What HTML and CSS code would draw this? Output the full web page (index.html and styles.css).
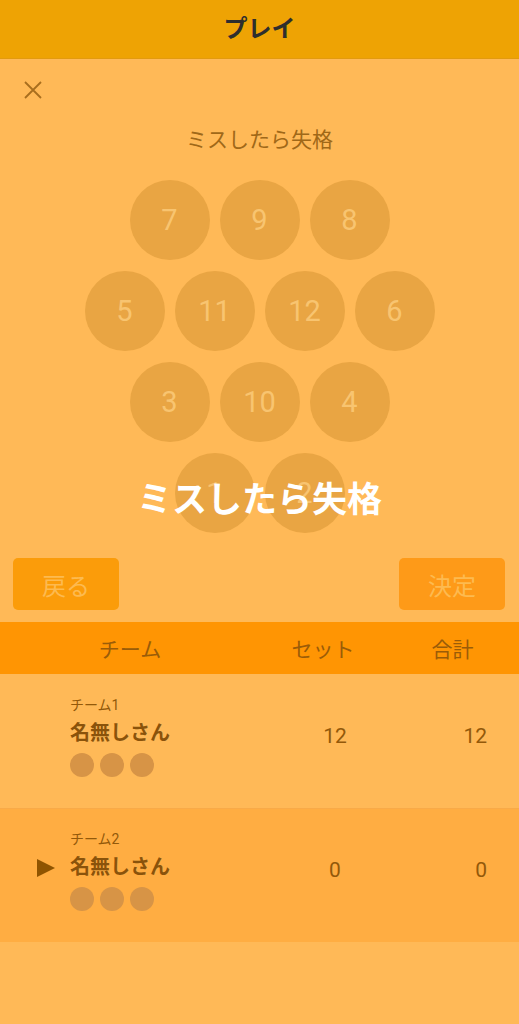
FILE: index.html
```html
<!DOCTYPE html>
<html lang="ja">
<head>
<meta charset="utf-8">
<title>プレイ</title>
<link rel="stylesheet" href="styles.css">
</head>
<body>
<header class="topbar"><h1 class="title">プレイ</h1></header>
<main class="page">
  <section class="panel">
    <div class="close-row">
      <svg class="close-icon" width="20" height="20" viewBox="0 0 20 20"><path d="M2 2 L18 18 M18 2 L2 18" stroke="#A86E1E" stroke-width="1.8" fill="none"/></svg>
    </div>
    <p class="subtitle">ミスしたら失格</p>
    <div class="pins">
      <div class="pin-row"><span class="pin">7</span><span class="pin">9</span><span class="pin">8</span></div>
      <div class="pin-row"><span class="pin">5</span><span class="pin">11</span><span class="pin">12</span><span class="pin">6</span></div>
      <div class="pin-row"><span class="pin">3</span><span class="pin">10</span><span class="pin">4</span></div>
      <div class="pin-row"><span class="pin">1</span><span class="pin">2</span></div>
      <div class="overlay-text">ミスしたら失格</div>
    </div>
    <div class="actions">
      <button class="btn btn-back">戻る</button>
      <button class="btn btn-ok">決定</button>
    </div>
  </section>
  <section class="table">
    <div class="thead">
      <span class="th th-team">チーム</span>
      <span class="th th-set">セット</span>
      <span class="th th-total">合計</span>
    </div>
    <div class="trow">
      <div class="marker"></div>
      <div class="team">
        <div class="team-label">チーム1</div>
        <div class="team-name">名無しさん</div>
        <div class="dots"><span class="dot"></span><span class="dot"></span><span class="dot"></span></div>
      </div>
      <div class="score set">12</div>
      <div class="score total">12</div>
    </div>
    <div class="trow active">
      <div class="marker"><span class="tri"></span></div>
      <div class="team">
        <div class="team-label">チーム2</div>
        <div class="team-name">名無しさん</div>
        <div class="dots"><span class="dot"></span><span class="dot"></span><span class="dot"></span></div>
      </div>
      <div class="score set">0</div>
      <div class="score total">0</div>
    </div>
  </section>
</main>
</body>
</html>
```
FILE: styles.css
```css
* { box-sizing: border-box; }
html, body {
  margin: 0;
  padding: 0;
  height: 100%;
}
body {
  background: #FFB957;
  font-family: "Roboto", "Noto Sans CJK JP", "Noto Sans", sans-serif;
  color: #93590A;
}
.topbar {
  height: 59px;
  background: #EEA304;
  border-bottom: 1px solid #E29A10;
  display: flex;
  align-items: center;
  justify-content: center;
}
.title {
  margin: 0;
  font-size: 24px;
  font-weight: 700;
  color: #2E2E2E;
  line-height: 1;
}
.panel {
  display: flex;
  flex-direction: column;
}
.close-row {
  height: 62px;
  padding: 21px 0 0 23px;
}
.close-icon { display: block; }
.subtitle {
  margin: 0;
  text-align: center;
  font-size: 21px;
  line-height: 38px;
  color: #A06818;
  height: 59px;
}
.pins {
  position: relative;
  display: flex;
  flex-direction: column;
  gap: 11px;
  align-items: center;
}
.pin-row {
  display: flex;
  gap: 10px;
  justify-content: center;
}
.pin {
  width: 80px;
  height: 80px;
  border-radius: 50%;
  background: #E9A543;
  color: #F8C470;
  font-size: 29px;
  display: flex;
  align-items: center;
  justify-content: center;
  line-height: 1;
  padding-top: 1px;
}
.overlay-text {
  position: absolute;
  left: 0;
  right: 0;
  top: 301px;
  text-align: center;
  color: #FFFFFF;
  font-size: 35px;
  font-weight: 700;
  line-height: 40px;
}
.actions {
  display: flex;
  justify-content: space-between;
  padding: 25px 14px 12px 13px;
}
.btn {
  width: 106px;
  height: 52px;
  border: none;
  border-radius: 5px;
  font-family: "Noto Sans CJK JP", sans-serif;
  font-size: 24px;
  color: #FDBA50;
  padding: 0;
}
.btn-back { background: #FB9C0A; }
.btn-ok { background: #FE9A18; }
.thead {
  height: 52px;
  background: #FF9503;
  display: flex;
  align-items: center;
}
.th {
  font-size: 21px;
  color: #9A5C08;
  text-align: center;
}
.th-team { width: 260px; }
.th-set { width: 126px; }
.th-total { width: 133px; }
.trow {
  height: 134px;
  display: grid;
  grid-template-columns: 70px 220px 90px 1fr;
  align-items: start;
  padding-top: 21px;
}
.trow.active {
  background: #FFAD42;
  border-top: 1px solid #F8AA48;
  padding-top: 20px;
}
.marker {
  height: 100%;
  display: flex;
  justify-content: center;
  padding: 30px 0 0 21px;
}
.tri {
  width: 0;
  height: 0;
  border-top: 9.5px solid transparent;
  border-bottom: 9.5px solid transparent;
  border-left: 18px solid #8F5400;
}
.team-label {
  font-size: 14px;
  line-height: 20px;
  color: #93590A;
}
.team-name {
  margin-top: 5px;
  font-size: 20px;
  font-weight: 700;
  line-height: 26px;
  color: #8A530B;
}
.dots {
  display: flex;
  gap: 6px;
  margin-top: 7px;
}
.dot {
  width: 24px;
  height: 24px;
  border-radius: 50%;
  background: #D79446;
}
.score {
  font-size: 21px;
  line-height: 26px;
  margin-top: 28px;
  color: #93590A;
}
.set { text-align: center; }
.total { text-align: right; padding-right: 32px; }
```
